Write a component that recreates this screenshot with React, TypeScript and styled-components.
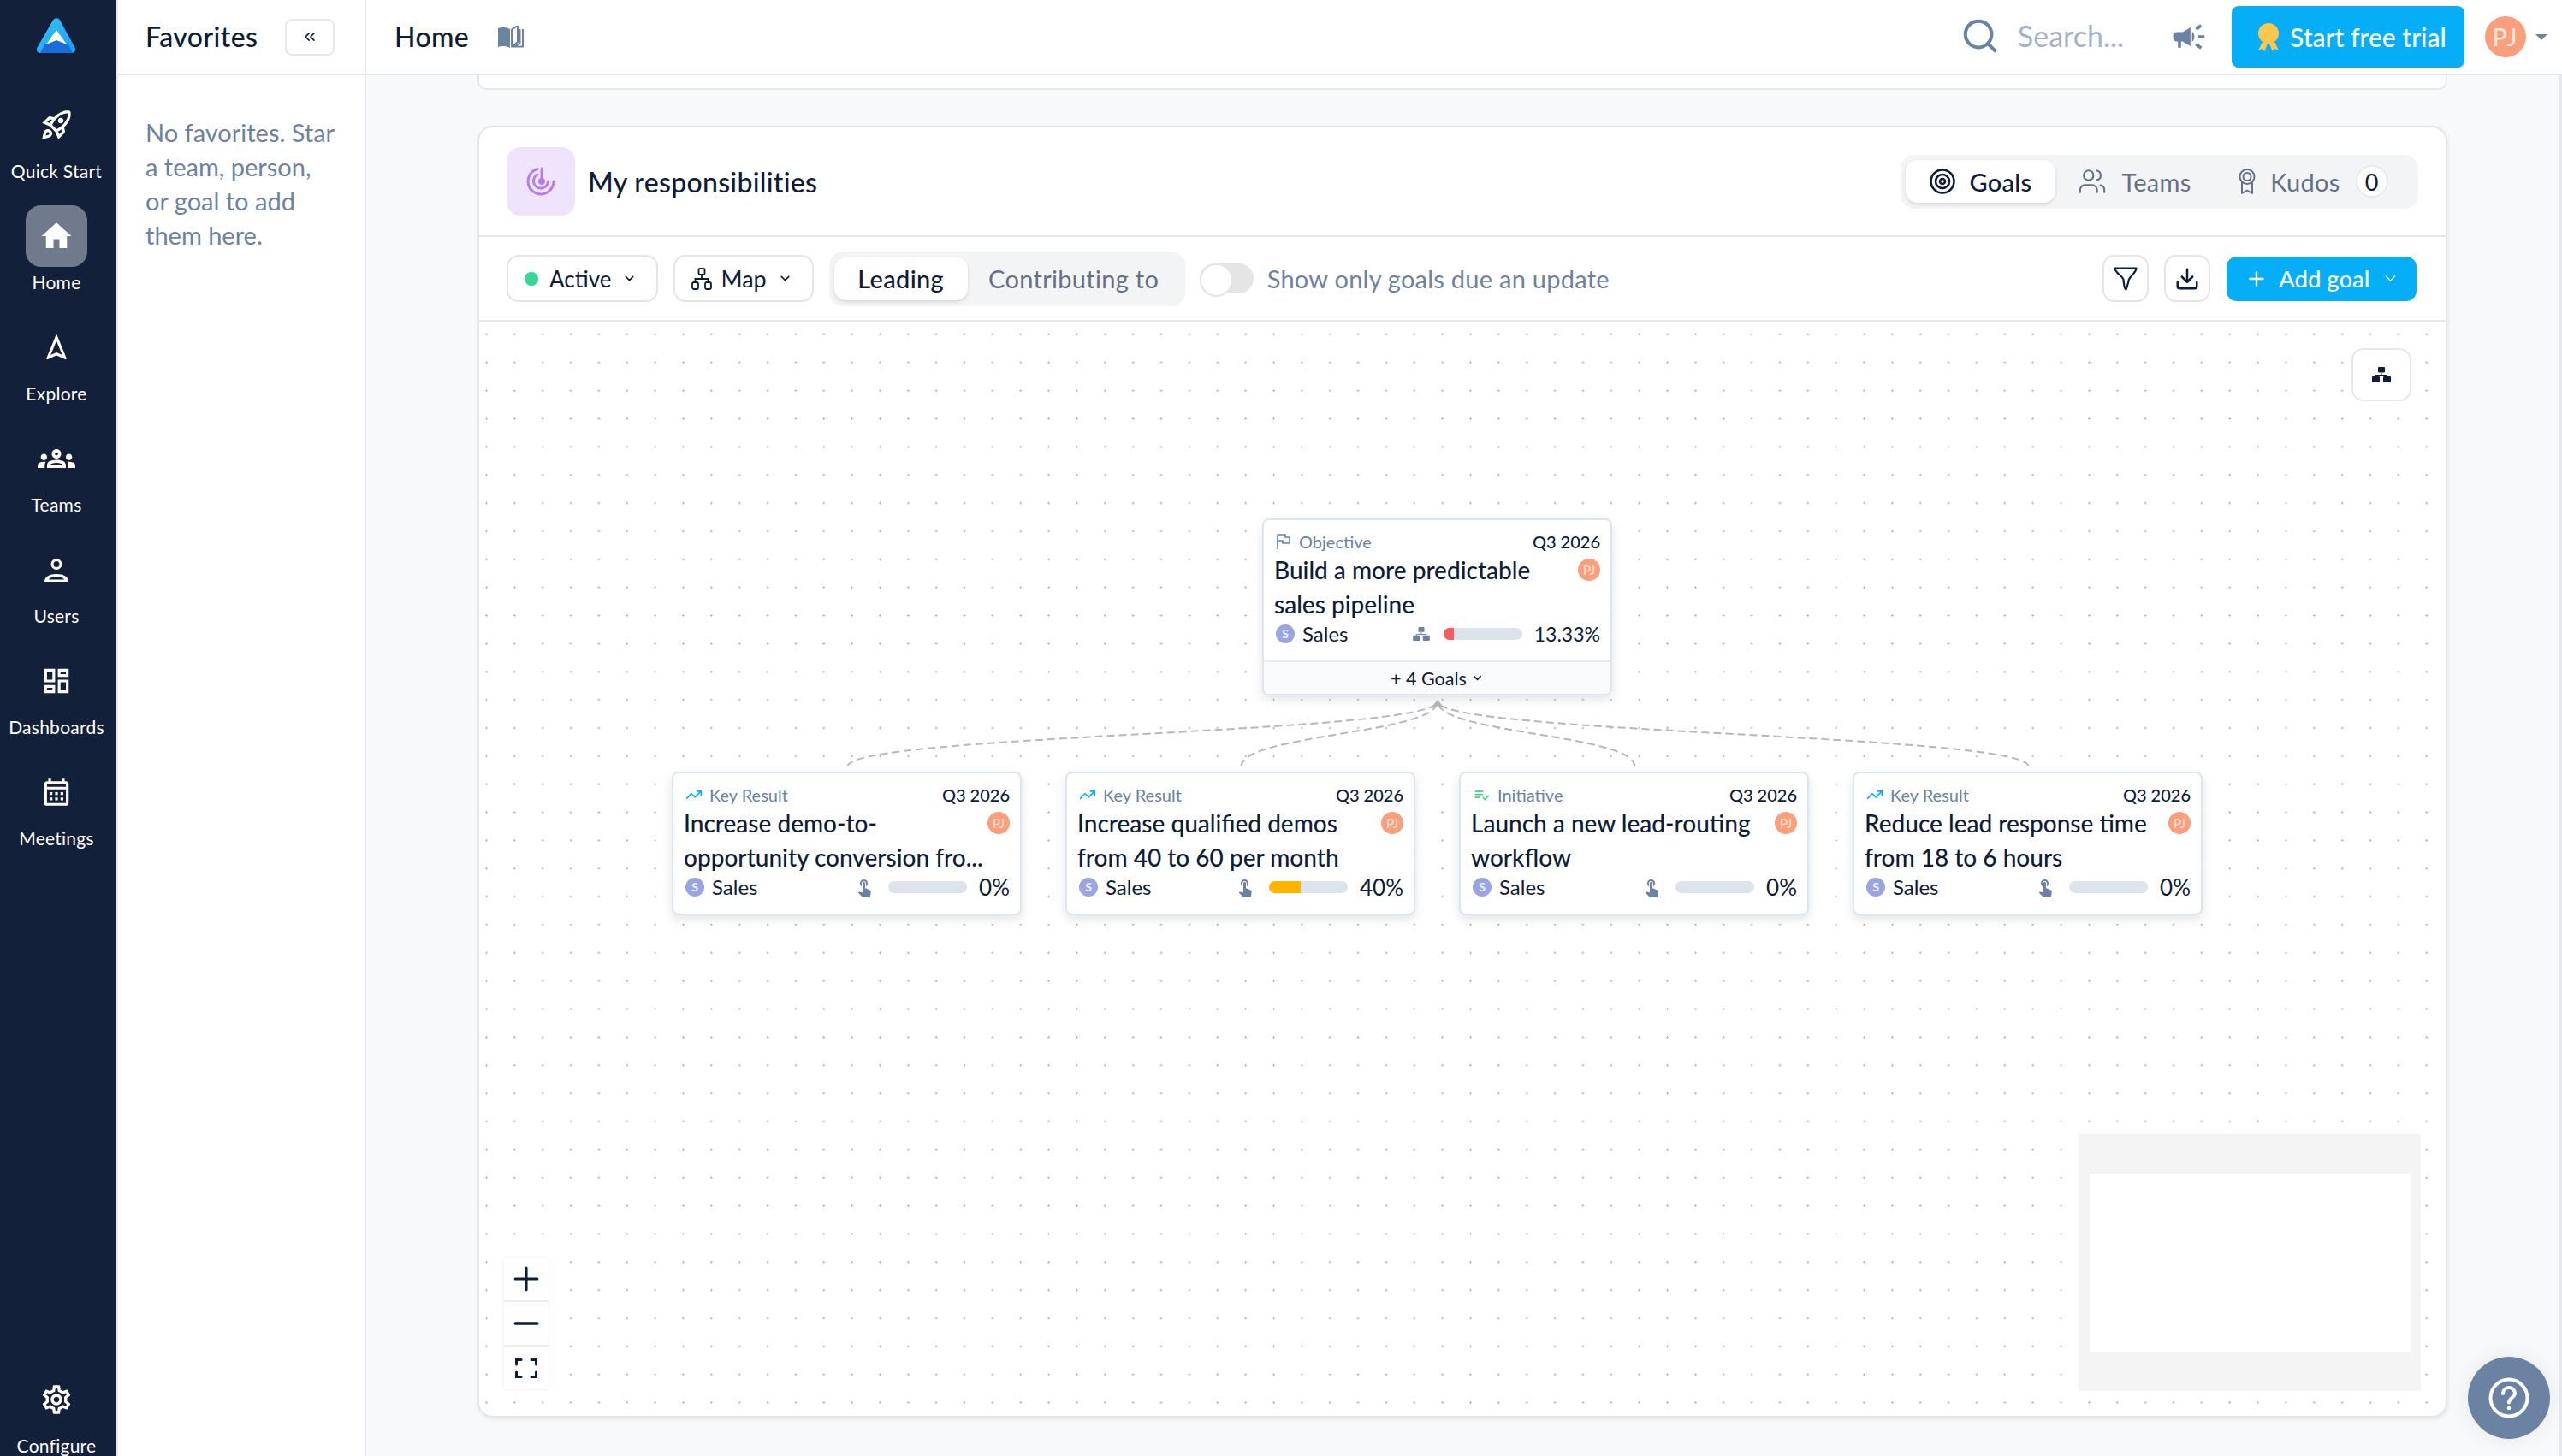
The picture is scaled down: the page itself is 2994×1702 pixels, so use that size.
import React from "react";
import styled, { createGlobalStyle } from "styled-components";
import { ChevronDown, ChevronsLeft, Plus, Minus, Download, Search, Users as UsersLine, TrendingUp } from "lucide-react";
import {
  MdOutlineRocketLaunch, MdHome, MdOutlineNavigation, MdOutlineGroups, MdOutlineDashboard,
  MdOutlineCalendarMonth, MdOutlineSettings, MdCampaign, MdTouchApp, MdPlaylistAddCheck,
} from "react-icons/md";

const GlobalStyle = createGlobalStyle`
  html, body { margin: 0; padding: 0; background: #fff; }
  * { box-sizing: border-box; }
  body { font-family: Lato, "Open Sans", Arial, sans-serif; color: #0e1c38; }
`;

const INK = "#0e1c38";
const SLATE = "#6b82a3";

const Page = styled.div`
  display: flex;
  width: 2994px;
  height: 1702px;
  overflow: hidden;
`;

const Sidebar = styled.nav`
  width: 138px;
  height: 1702px;
  flex: none;
  background: #132039;
  border-right: 2px solid #e8ebf0;
  padding-right: 4px;
  display: flex;
  flex-direction: column;
  align-items: center;
`;

const LogoBox = styled.div`
  height: 110px;
  padding-top: 21px;
  display: flex;
  justify-content: center;
`;

const NavItem = styled.div<{ $bottom?: boolean }>`
  height: 130px;
  flex: none;
  width: 100%;
  display: flex;
  flex-direction: column;
  align-items: center;
  ${(p) => (p.$bottom ? "margin-top: auto; margin-bottom: -28px;" : "")}
`;

const NavIcon = styled.div<{ $active?: boolean }>`
  width: 72px;
  height: 72px;
  border-radius: 18px;
  display: flex;
  align-items: center;
  justify-content: center;
  color: #fff;
  background: ${(p) => (p.$active ? "#717a8d" : "transparent")};
`;

const NavLabel = styled.div`
  margin-top: 4px;
  font-size: 21px;
  line-height: 28px;
  color: #fff;
  white-space: nowrap;
  letter-spacing: 0.25px;
`;

const FavPanel = styled.aside`
  width: 290px;
  flex: none;
  background: #fff;
  border-right: 2px solid #e6e8ec;
`;

const BarBase = styled.header`
  height: 88px;
  border-bottom: 2px solid #e4e8ee;
  display: flex;
  align-items: center;
  background: #fff;
`;

const FavHeader = styled(BarBase)`
  padding-left: 32px;
`;

const BarTitle = styled.h1`
  margin: 0;
  font-size: 32px;
  line-height: 40px;
  font-weight: 500;
  color: ${INK};
  letter-spacing: 0.4px;
`;

const CollapseButton = styled.div`
  width: 58px;
  height: 43px;
  margin-left: 32px;
  border: 2px solid #e6e8ec;
  border-radius: 8px;
  display: flex;
  align-items: center;
  justify-content: center;
  color: ${INK};
`;

const FavText = styled.p`
  margin: 0;
  padding: 47px 30px 0 32px;
  font-size: 29px;
  line-height: 40px;
  color: ${SLATE};
`;

const Column = styled.div`
  flex: 1;
  min-width: 0;
  display: flex;
  flex-direction: column;
  background: #f8f9fb;
`;

const TopBar = styled(BarBase)`
  padding: 0 17px 0 33px;
`;

const BookWrap = styled.div`
  margin-left: 34px;
  display: flex;
  flex: 1;
`;

const SearchWrap = styled.div`
  display: flex;
  margin: -2px -6px 0 0;
  color: ${SLATE};
`;

const SearchLabel = styled.span`
  margin: -3px 0 0 27px;
  font-size: 34px;
  color: #a3b2c9;
`;

const MegaWrap = styled.div`
  margin-left: 54px;
  display: flex;
  color: ${SLATE};
`;

const TrialButton = styled.div`
  margin-left: 28px;
  width: 272px;
  height: 72px;
  border-radius: 8px;
  background: #06aef7;
  color: #fff;
  display: flex;
  align-items: center;
  padding-left: 31px;
  gap: 13px;
  font-size: 30px;
  font-weight: 500;
`;

const AvatarBig = styled.div`
  margin-left: 24px;
  width: 48px;
  height: 48px;
  border-radius: 50%;
  background: #fa9f7d;
  color: #fde6da;
  font-size: 28px;
  font-weight: 500;
  letter-spacing: 2px;
  display: flex;
  align-items: center;
  justify-content: center;
`;

const Caret = styled.div`
  margin-left: 11px;
  width: 0;
  height: 0;
  border-left: 7px solid transparent;
  border-right: 7px solid transparent;
  border-top: 7px solid ${SLATE};
`;

const Scroller = styled.main`
  flex: 1;
  min-height: 0;
  padding: 0 131px 0 130px;
  border-right: 3px solid #e6e8ec;
`;

const PrevCard = styled.div`
  height: 17px;
  background: #fff;
  border: 2px solid #e6e8ec;
  border-top: none;
  border-radius: 0 0 10px 10px;
`;

const MainCard = styled.section`
  margin-top: 42px;
  height: 1510px;
  background: #fff;
  border: 2px solid #e6e6e6;
  border-radius: 18px;
  box-shadow: 1px 2px 5px rgba(0, 0, 0, 0.08);
  display: flex;
  flex-direction: column;
  overflow: hidden;
`;

const CardHead = styled.div`
  height: 128px;
  flex: none;
  padding: 0 32px;
  display: flex;
  align-items: center;
  border-bottom: 2px solid #e6e6e6;
`;

const PurpleTile = styled.div`
  width: 80px;
  height: 80px;
  border-radius: 16px;
  background: #f0e4fd;
  display: flex;
  align-items: center;
  justify-content: center;
`;

const CardTitle = styled.h2`
  margin: 0 0 0 15px;
  flex: 1;
  font-size: 32px;
  font-weight: 500;
  letter-spacing: 0.3px;
  color: ${INK};
`;

const Segment = styled.div<{ $h?: number }>`
  height: ${(p) => p.$h ?? 64}px;
  padding: 0 6px;
  display: flex;
  align-items: center;
  background: #f3f4f6;
  border-radius: 16px;
`;

const SegTab = styled.div<{ $active?: boolean; $w?: number }>`
  height: 50px;
  ${(p) => (p.$w ? `width: ${p.$w}px;` : "")}
  display: flex;
  align-items: center;
  justify-content: center;
  gap: 17px;
  border-radius: 14px;
  font-size: 29px;
  letter-spacing: 0.3px;
  font-weight: ${(p) => (p.$active ? 500 : 400)};
  color: ${(p) => (p.$active ? INK : "#667085")};
  background: ${(p) => (p.$active ? "#fff" : "transparent")};
  box-shadow: ${(p) => (p.$active ? "0 2px 4px rgba(0,0,0,.12)" : "none")};
`;

const CountBadge = styled.div`
  width: 38px;
  height: 38px;
  margin-left: 1px;
  border-radius: 50%;
  background: #fff;
  border: 2px solid #e9ebee;
  color: ${INK};
  font-size: 27px;
  display: flex;
  align-items: center;
  justify-content: center;
`;

const Toolbar = styled.div`
  height: 99px;
  flex: none;
  padding: 0 34px 0 32px;
  display: flex;
  align-items: center;
  border-bottom: 2px solid #e6e6e6;
`;

const Chip = styled.div<{ $pl: number; $pr: number; $ml?: number; $fs?: number }>`
  height: 55px;
  padding: 0 ${(p) => p.$pr}px 0 ${(p) => p.$pl}px;
  margin-left: ${(p) => p.$ml ?? 0}px;
  border: 2px solid #e5e5e5;
  border-radius: 14px;
  display: flex;
  align-items: center;
  font-size: ${(p) => p.$fs ?? 27}px;
  color: ${INK};
`;

const GreenDot = styled.span`
  width: 16px;
  height: 16px;
  border-radius: 50%;
  background: #37d795;
  margin-right: 13px;
`;

const ChipChevron = styled.span`
  margin-left: 13px;
  display: flex;
`;

const Toggle = styled.div`
  position: relative;
  width: 63px;
  height: 35px;
  margin-left: 17px;
  background: #e5e5e5;
  border-radius: 18px;
  &::after {
    content: "";
    position: absolute;
    left: 0;
    top: 0;
    width: 35px;
    height: 35px;
    border-radius: 50%;
    background: #fff;
    border: 2px solid #e5e5e5;
  }
`;

const ToggleLabel = styled.span`
  margin-left: 16px;
  flex: 1;
  font-size: 29px;
  letter-spacing: 0.25px;
  color: ${SLATE};
`;

const IconButton = styled.div<{ $ml?: number }>`
  width: 54px;
  height: 55px;
  margin-left: ${(p) => p.$ml ?? 0}px;
  border: 2px solid #e5e5e5;
  border-radius: 14px;
  display: flex;
  align-items: center;
  justify-content: center;
  color: ${INK};
`;

const AddButton = styled.div`
  width: 222px;
  height: 52px;
  margin-left: 19px;
  border-radius: 12px;
  background: #06aef7;
  color: #fff;
  display: flex;
  align-items: center;
  padding-left: 22px;
  font-size: 27.5px;
  font-weight: 500;
  gap: 12px;
`;

const Canvas = styled.div`
  position: relative;
  flex: 1;
  min-height: 0;
  background-color: #fff;
  background-image: radial-gradient(circle, #a9a9a9 0.9px, transparent 1.2px);
  background-size: 32.87px 32.87px;
  background-position: -8px -1.5px;
`;

const EdgeLayer = styled.svg`
  position: absolute;
  left: 0;
  top: 0;
  width: 100%;
  height: 100%;
`;

const LayoutButton = styled.div`
  position: absolute;
  left: 2188px;
  top: 31px;
  width: 70px;
  height: 62px;
  background: #fff;
  border: 2px solid #e8e8e8;
  border-radius: 14px;
  display: flex;
  align-items: center;
  justify-content: center;
`;

const Node = styled.article<{ $x: number; $y: number }>`
  position: absolute;
  left: ${(p) => p.$x}px;
  top: ${(p) => p.$y}px;
  width: 409px;
  background: #fff;
  border: 2px solid #dfe5ec;
  border-radius: 8px;
  box-shadow: 0 5px 12px rgba(30, 45, 70, 0.13);
  overflow: hidden;
`;

const NodeBody = styled.div`
  height: 164px;
  padding: 12px 12px 0 12px;
`;

const NodeHead = styled.div`
  height: 26px;
  display: flex;
  align-items: center;
  font-size: 20px;
  line-height: 26px;
`;

const KindIcon = styled.span`
  display: flex;
  margin-right: 8px;
  margin-left: 2px;
`;

const KindLabel = styled.span`
  flex: 1;
  color: ${SLATE};
`;

const Quarter = styled.span`
  color: ${INK};
  font-weight: 500;
`;

const TitleRow = styled.div`
  height: 80px;
  display: flex;
  justify-content: space-between;
`;

const NodeTitle = styled.div`
  font-size: 28px;
  line-height: 40px;
  font-weight: 500;
  color: ${INK};
  white-space: nowrap;
`;

const AvatarSmall = styled.div`
  margin-top: 7px;
  width: 26px;
  height: 26px;
  border-radius: 50%;
  background: #fa9f7d;
  color: #fde0d0;
  font-size: 15px;
  font-weight: 500;
  display: flex;
  align-items: center;
  justify-content: center;
`;

const MetaRow = styled.div`
  height: 30px;
  display: flex;
  align-items: center;
  font-size: 24px;
  line-height: 30px;
  color: ${INK};
`;

const TeamDot = styled.span`
  width: 22px;
  height: 22px;
  margin-left: 2px;
  margin-right: 9px;
  border-radius: 50%;
  background: #98a5e0;
  color: #eef0fb;
  font-size: 14px;
  font-weight: 700;
  display: flex;
  align-items: center;
  justify-content: center;
`;

const TeamName = styled.span`
  flex: 1;
`;

const MetaIcon = styled.span`
  display: flex;
  margin-right: 16px;
`;

const Progress = styled.div`
  width: 92px;
  height: 14px;
  border-radius: 7px;
  background: #dde3ea;
  overflow: hidden;
  margin-right: 14px;
`;

const ProgressFill = styled.div<{ $color: string }>`
  height: 100%;
  background: ${(p) => p.$color};
`;

const Percent = styled.span<{ $size: number }>`
  font-size: ${(p) => p.$size}px;
`;

const NodeFooter = styled.div`
  height: 39px;
  border-top: 2px solid #e6ebf0;
  background: #f8fafc;
  display: flex;
  align-items: center;
  justify-content: center;
  gap: 5px;
  font-size: 21.5px;
  color: ${INK};
`;

const ZoomStack = styled.div`
  position: absolute;
  left: 29px;
  top: 1094px;
  width: 52px;
  display: flex;
  flex-direction: column;
  gap: 2px;
  background: #eee;
  box-shadow: 0 0 3px rgba(0, 0, 0, 0.1);
`;

const ZoomBtn = styled.div`
  height: 50px;
  background: #fefefe;
  display: flex;
  align-items: center;
  justify-content: center;
  color: ${INK};
`;

const MiniMap = styled.div`
  position: absolute;
  left: 1869px;
  top: 950px;
  width: 400px;
  height: 300px;
  background: #f4f4f4;
  display: flex;
  align-items: center;
  justify-content: center;
`;

const MiniView = styled.div`
  width: 375px;
  height: 208px;
  background: #fff;
`;

const HelpButton = styled.div`
  position: absolute;
  left: 2884px;
  top: 1586px;
  width: 96px;
  height: 96px;
  border-radius: 50%;
  background: #6b82a3;
  box-shadow: 0 0 24px rgba(0, 0, 0, 0.08);
  display: flex;
  align-items: center;
  justify-content: center;
`;

const Logo = () => (
  <svg width="46" height="41" viewBox="0 0 46 41">
    <defs>
      <linearGradient id="lg1" x1="0" y1="0" x2="1" y2="1">
        <stop offset="0" stopColor="#37c4fb" />
        <stop offset="1" stopColor="#1a9bf0" />
      </linearGradient>
    </defs>
    <path d="M19 2.5c2-3 6-3 8 0l17.5 32c1.6 3 0 6.5-3.5 6.5H4c-3.5 0-5.1-3.5-3.5-6.5z" fill="url(#lg1)" />
    <path d="M23 26l-13.500 4.500L4 41h38l-5.500-10.500z" fill="#1a6cd8" />
    <path d="M23 14L35 31 23 26 11 31z" fill="#fff" />
  </svg>
);

const BookIcon = () => (
  <svg width="30" height="26" viewBox="0 0 30 26">
    <path d="M0 3c4-1.500 9-1.500 14 1v22c-5-2.500-10-2.500-14-1z" fill={SLATE} />
    <path d="M16 25.500V4.500L23 0v19l-5.500 4.500M25.500 4v17l-9 3.500h12.500V4" fill="none" stroke={SLATE} strokeWidth="2" />
  </svg>
);

const UserGlyph = () => (
  <svg width="28" height="27" viewBox="0 0 28 27" fill="none">
    <circle cx="14" cy="6.500" r="5" stroke="#fff" strokeWidth="3" />
    <path d="M0 27c0-6 6-9 14-9s14 3 14 9z" fill="#fff" />
    <path d="M5 24.500c1-2 5-3.500 9-3.500s8 1.500 9 3.500z" fill="#132039" />
  </svg>
);

const MedalIcon = () => (
  <svg width="24" height="33" viewBox="0 0 24 33">
    <path d="M5 22L0 32l5-2 2.500 3L11 24zM19 22l5 10-5-2-2.500 3L13 24z" fill="#fcc74e" />
    <circle cx="12" cy="12" r="12" fill="#fcc74e" />
  </svg>
);

const SpiralIcon = () => (
  <svg width="34" height="34" viewBox="0 0 34 34" fill="none" stroke="#b57ee8" strokeWidth="3" strokeLinecap="round">
    <path d="M13 2.500A15 15 0 1 0 32 17" />
    <path d="M13 9A8.500 8.500 0 1 0 25.500 17" />
    <path d="M18 17V2" />
    <circle cx="18" cy="17" r="2.500" fill="#b57ee8" />
  </svg>
);

const TargetIcon = () => (
  <svg width="30" height="30" viewBox="0 0 30 30" fill="none" stroke={INK} strokeWidth="2.600">
    <circle cx="15" cy="15" r="13.500" />
    <circle cx="15" cy="15" r="8" />
    <circle cx="15" cy="15" r="3" />
  </svg>
);

const RibbonIcon = () => (
  <svg width="20" height="30" viewBox="0 0 20 30" fill="none" stroke="#667085" strokeWidth="2" strokeLinejoin="round">
    <circle cx="10" cy="9.500" r="8.500" />
    <path d="M4 16v13l6-3.500 6 3.500V16" />
    <circle cx="10" cy="9.500" r="4.500" />
  </svg>
);

const TreeOutline = () => (
  <svg width="24" height="26" viewBox="0 0 24 26" fill="none" stroke={INK} strokeWidth="1.800">
    <rect x="8.500" y="1" width="7" height="7" rx="1.500" />
    <rect x="1" y="17" width="7" height="8" rx="2" />
    <rect x="16" y="17" width="7" height="8" rx="2" />
    <path d="M12 8v5M4.500 17v-4h15v4" />
  </svg>
);

const FunnelIcon = () => (
  <svg width="28" height="28" viewBox="0 0 28 28" fill="none" stroke={INK} strokeWidth="2.200" strokeLinejoin="round">
    <path d="M1.500 1.500h25c0 5-7.500 10-8.500 13-1.200 3.500-1.500 8-3.500 12-2.500-1-2.500-8-3-11.500C11 11 1.500 7 1.500 1.500z" />
  </svg>
);

const TreeSolid = ({ color, w, h }: { color: string; w: number; h: number }) => (
  <svg width={w} height={h} viewBox="0 0 22 18" fill={color}>
    <rect x="7" y="0" width="8" height="6.500" rx="1" />
    <rect x="0" y="11" width="9" height="7" rx="1" />
    <rect x="13" y="11" width="9" height="7" rx="1" />
    <path d="M10.500 6.500h1V9h6.500v2h-1V10H5v1H4V9h6.500z" />
  </svg>
);

const FlagIcon = () => (
  <svg width="16" height="18" viewBox="0 0 16 18" fill="none" stroke={SLATE} strokeWidth="1.700" strokeLinejoin="round">
    <path d="M1 18V1h9v3h5v7H7V8H1" />
  </svg>
);

const FitIcon = () => (
  <svg width="26" height="23" viewBox="0 0 26 23" fill="none" stroke={INK} strokeWidth="3" strokeLinecap="round">
    <path d="M1.500 7V1.500H7M19 1.500h5.500V7M1.500 16v5.500H7M19 21.500h5.500V16" />
  </svg>
);

const HelpIcon = () => (
  <svg width="48" height="48" viewBox="0 0 48 48" fill="none" stroke="#fff" strokeWidth="4" strokeLinecap="round">
    <circle cx="24" cy="24" r="21.500" />
    <path d="M17 19c0-4 3-7 7-7s7 3 7 6.500c0 5-7 5.500-7 11" />
    <circle cx="24" cy="36" r="1.500" fill="#fff" strokeWidth="1.500" />
  </svg>
);

const navItems = [
  { label: "Quick Start", icon: <MdOutlineRocketLaunch size={40} /> },
  { label: "Home", icon: <MdHome size={42} />, active: true },
  { label: "Explore", icon: <MdOutlineNavigation size={38} /> },
  { label: "Teams", icon: <MdOutlineGroups size={44} /> },
  { label: "Users", icon: <UserGlyph /> },
  { label: "Dashboards", icon: <MdOutlineDashboard size={38} /> },
  { label: "Meetings", icon: <MdOutlineCalendarMonth size={38} /> },
];

type Goal = {
  x: number;
  kind: "kr" | "init";
  lines: [string, string];
  pct: number;
};

const goals: Goal[] = [
  { x: 225, kind: "kr", lines: ["Increase demo-to-", "opportunity conversion fro..."], pct: 0 },
  { x: 685, kind: "kr", lines: ["Increase qualified demos", "from 40 to 60 per month"], pct: 40 },
  { x: 1145, kind: "init", lines: ["Launch a new lead-routing", "workflow"], pct: 0 },
  { x: 1605, kind: "kr", lines: ["Reduce lead response time", "from 18 to 6 hours"], pct: 0 },
];

const edgeSources = [429.5, 889.5, 1349.5, 1809.5];

const Meta = ({ icon, pct, label, color, size }: { icon: React.ReactNode; pct: number; label: string; color: string; size: number }) => (
  <MetaRow>
    <TeamDot>S</TeamDot>
    <TeamName>Sales</TeamName>
    <MetaIcon>{icon}</MetaIcon>
    <Progress>
      <ProgressFill $color={color} style={{ width: `${pct}%` }} />
    </Progress>
    <Percent $size={size}>{label}</Percent>
  </MetaRow>
);

export default function App() {
  return (
    <Page>
      <GlobalStyle />
      <Sidebar>
        <LogoBox>
          <Logo />
        </LogoBox>
        {navItems.map((n) => (
          <NavItem key={n.label}>
            <NavIcon $active={n.active}>{n.icon}</NavIcon>
            <NavLabel>{n.label}</NavLabel>
          </NavItem>
        ))}
        <NavItem $bottom>
          <NavIcon>
            <MdOutlineSettings size={40} />
          </NavIcon>
          <NavLabel>Configure</NavLabel>
        </NavItem>
      </Sidebar>

      <FavPanel>
        <FavHeader>
          <BarTitle>Favorites</BarTitle>
          <CollapseButton>
            <ChevronsLeft size={20} strokeWidth={2} />
          </CollapseButton>
        </FavHeader>
        <FavText>No favorites. Star a team, person, or goal to add them here.</FavText>
      </FavPanel>

      <Column>
        <TopBar>
          <BarTitle>Home</BarTitle>
          <BookWrap>
            <BookIcon />
          </BookWrap>
          <SearchWrap>
            <Search size={46} strokeWidth={2.1} />
          </SearchWrap>
          <SearchLabel>Search...</SearchLabel>
          <MegaWrap>
            <MdCampaign size={44} />
          </MegaWrap>
          <TrialButton>
            <MedalIcon />
            <span>Start free trial</span>
          </TrialButton>
          <AvatarBig>PJ</AvatarBig>
          <Caret />
        </TopBar>

        <Scroller>
          <PrevCard />
          <MainCard>
            <CardHead>
              <PurpleTile>
                <SpiralIcon />
              </PurpleTile>
              <CardTitle>My responsibilities</CardTitle>
              <Segment $h={63}>
                <SegTab $active $w={175}>
                  <TargetIcon />
                  Goals
                </SegTab>
                <SegTab $w={185}>
                  <UsersLine size={34} strokeWidth={1.5} />
                  Teams
                </SegTab>
                <SegTab $w={233}>
                  <RibbonIcon />
                  Kudos
                  <CountBadge>0</CountBadge>
                </SegTab>
              </Segment>
            </CardHead>

            <Toolbar>
              <Chip $pl={19} $pr={23} $fs={26}>
                <GreenDot />
                Active
                <ChipChevron>
                  <ChevronDown size={17} strokeWidth={2.2} />
                </ChipChevron>
              </Chip>
              <Chip $pl={19} $pr={23} $ml={18}>
                <TreeOutline />
                <span style={{ marginLeft: 10 }}>Map</span>
                <ChipChevron>
                  <ChevronDown size={17} strokeWidth={2.2} />
                </ChipChevron>
              </Chip>
              <span style={{ width: 18 }} />
              <Segment>
                <SegTab $active $w={156}>
                  Leading
                </SegTab>
                <SegTab $w={248}>Contributing to</SegTab>
              </Segment>
              <Toggle />
              <ToggleLabel>Show only goals due an update</ToggleLabel>
              <IconButton>
                <FunnelIcon />
              </IconButton>
              <IconButton $ml={18}>
                <Download size={30} strokeWidth={2} />
              </IconButton>
              <AddButton>
                <Plus size={26} strokeWidth={2.2} />
                <span style={{ marginLeft: 1 }}>Add goal</span>
                <ChevronDown size={21} strokeWidth={1.5} style={{ marginLeft: 2 }} />
              </AddButton>
            </Toolbar>

            <Canvas>
              <EdgeLayer viewBox="0 0 2296 1279" fill="none">
                {edgeSources.map((x) => (
                  <path
                    key={x}
                    d={`M${x} 520C${x} 482 1119 482 1119 444`}
                    stroke="#b4b7bf"
                    strokeWidth="2"
                    strokeDasharray="9 5"
                  />
                ))}
                <path d="M1119 442l-8 10 8-3 8 3z" fill="#b4b7bf" />
              </EdgeLayer>

              <LayoutButton>
                <TreeSolid color={INK} w={22} h={18} />
              </LayoutButton>

              <Node $x={915} $y={230}>
                <NodeBody>
                  <NodeHead>
                    <KindIcon style={{ marginLeft: 3, marginRight: 10 }}>
                      <FlagIcon />
                    </KindIcon>
                    <KindLabel>Objective</KindLabel>
                    <Quarter>Q3 2026</Quarter>
                  </NodeHead>
                  <TitleRow>
                    <NodeTitle>
                      Build a more predictable
                      <br />
                      sales pipeline
                    </NodeTitle>
                    <AvatarSmall>PJ</AvatarSmall>
                  </TitleRow>
                  <Meta icon={<TreeSolid color={SLATE} w={20} h={16} />} pct={13.33} label="13.33%" color="#fa5a5a" size={23} />
                </NodeBody>
                <NodeFooter>
                  + 4 Goals
                  <ChevronDown size={15} strokeWidth={2.4} />
                </NodeFooter>
              </Node>

              {goals.map((g) => (
                <Node key={g.x} $x={g.x} $y={526}>
                  <NodeBody>
                    <NodeHead>
                      <KindIcon>
                        {g.kind === "kr" ? (
                          <TrendingUp size={20} color="#06aef7" strokeWidth={2} />
                        ) : (
                          <MdPlaylistAddCheck size={21} color="#3dd68c" />
                        )}
                      </KindIcon>
                      <KindLabel>{g.kind === "kr" ? "Key Result" : "Initiative"}</KindLabel>
                      <Quarter>Q3 2026</Quarter>
                    </NodeHead>
                    <TitleRow>
                      <NodeTitle>
                        {g.lines[0]}
                        <br />
                        {g.lines[1]}
                      </NodeTitle>
                      <AvatarSmall>PJ</AvatarSmall>
                    </TitleRow>
                    <Meta icon={<MdTouchApp size={24} color={SLATE} />} pct={g.pct} label={`${g.pct}%`} color="#ffb400" size={26} />
                  </NodeBody>
                </Node>
              ))}

              <ZoomStack>
                <ZoomBtn>
                  <Plus size={44} strokeWidth={1.7} />
                </ZoomBtn>
                <ZoomBtn>
                  <Minus size={44} strokeWidth={1.9} />
                </ZoomBtn>
                <ZoomBtn>
                  <FitIcon />
                </ZoomBtn>
              </ZoomStack>

              <MiniMap>
                <MiniView />
              </MiniMap>
            </Canvas>
          </MainCard>
        </Scroller>
      </Column>

      <HelpButton>
        <HelpIcon />
      </HelpButton>
    </Page>
  );
}
